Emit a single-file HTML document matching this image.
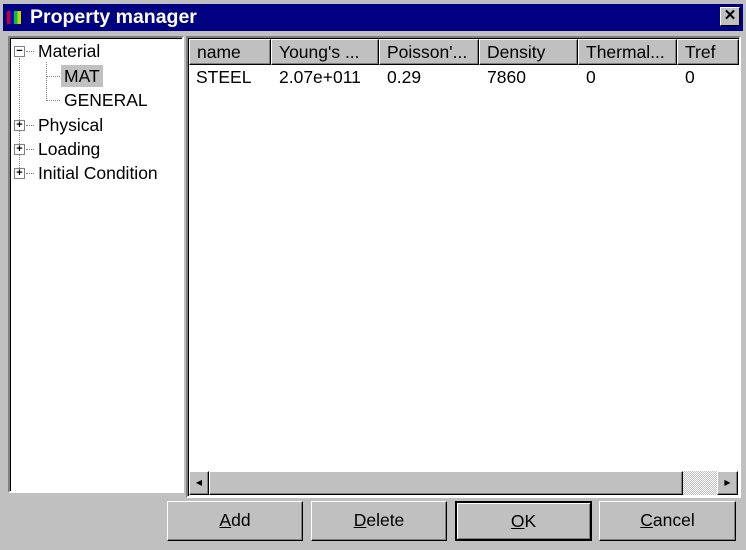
<!DOCTYPE html>
<html><head><style>
*{margin:0;padding:0;box-sizing:border-box}
body{width:746px;height:550px;background:#c0c0c0;font-family:"Liberation Sans",sans-serif;font-size:17.5px;position:relative;overflow:hidden}
.abs{position:absolute}
.title{left:3px;top:4px;width:740px;height:27px;background:#000080;color:#fff;font-weight:bold;font-size:19.5px;line-height:27px}
.close{left:717px;top:3px;width:20px;height:19px;background:#c0c0c0;border:1px solid;border-color:#fff #000 #000 #fff;color:#000;font-size:15px;line-height:16px;text-align:center;font-weight:bold}
.tree{left:8px;top:36px;width:176px;height:457px;background:#fff;border:2px solid;border-color:#808080 #fff #fff #808080;box-shadow:inset 1px 1px 0 #000}
.list{left:186px;top:36px;width:555px;height:462px;background:#fff;border:2px solid;border-color:#808080 #fff #fff #808080;box-shadow:inset 1px 1px 0 #000}
.hd{top:39px;height:26px;background:#c0c0c0;border:1px solid;border-color:#fff #000 #000 #fff;box-shadow:inset -1px -1px 0 #808080;line-height:24px;padding-left:7px;color:#000;overflow:hidden;white-space:nowrap}
.cell{top:66px;line-height:22px;color:#000}
.t{color:#000;line-height:22px;white-space:nowrap}
.pm{width:11px;height:11px;border:1px solid #808080;background:#fff;font-size:11px;line-height:9px;text-align:center;font-weight:bold}
.dv{border-left:1px dotted #808080}
.dh{border-top:1px dotted #808080;height:0}
.btn{top:501px;height:40px;background:#c0c0c0;border:1px solid;border-color:#fff #000 #000 #fff;box-shadow:inset -1px -1px 0 #808080;text-align:center;line-height:36px;color:#000}
.sb{background:#c0c0c0;border:1px solid;border-color:#fff #000 #000 #fff;box-shadow:inset -1px -1px 0 #808080}
</style></head><body>
<div class="abs title"><span style="position:absolute;left:4px;top:7px;width:14px;height:13px;background:linear-gradient(90deg,#f00 0 25%,#00f 25% 50%,#0f0 50% 75%,#ff0 75%);opacity:.8"></span><span style="position:absolute;left:27px">Property manager</span><div class="abs close">✕</div></div>

<div class="abs tree">
<div class="abs dv" style="left:9px;top:20px;height:114px"></div>
<div class="abs dv" style="left:36px;top:24px;height:39px"></div>
<div class="abs dh" style="left:36px;top:38px;width:14px"></div>
<div class="abs dh" style="left:36px;top:62px;width:14px"></div>
<div class="abs pm" style="left:4px;top:8px">−</div>
<div class="abs dh" style="left:16px;top:13px;width:8px"></div>
<div class="abs t" style="left:28px;top:2px">Material</div>
<div class="abs t" style="left:51px;top:27px;background:#c0c0c0;padding:0 3px">MAT</div>
<div class="abs t" style="left:54px;top:51px">GENERAL</div>
<div class="abs pm" style="left:4px;top:82px">+</div><div class="abs dh" style="left:16px;top:87px;width:8px"></div>
<div class="abs t" style="left:28px;top:76px">Physical</div>
<div class="abs pm" style="left:4px;top:106px">+</div><div class="abs dh" style="left:16px;top:111px;width:8px"></div>
<div class="abs t" style="left:28px;top:100px">Loading</div>
<div class="abs pm" style="left:4px;top:130px">+</div><div class="abs dh" style="left:16px;top:135px;width:8px"></div>
<div class="abs t" style="left:28px;top:124px">Initial Condition</div>
</div>

<div class="abs list"></div>
<div class="abs hd" style="left:189px;width:82px">name</div>
<div class="abs hd" style="left:271px;width:108px">Young's ...</div>
<div class="abs hd" style="left:379px;width:100px">Poisson'...</div>
<div class="abs hd" style="left:479px;width:99px">Density</div>
<div class="abs hd" style="left:578px;width:99px">Thermal...</div>
<div class="abs hd" style="left:677px;width:62px">Tref</div>
<div class="abs cell" style="left:196px">STEEL</div>
<div class="abs cell" style="left:279px">2.07e+011</div>
<div class="abs cell" style="left:387px">0.29</div>
<div class="abs cell" style="left:487px">7860</div>
<div class="abs cell" style="left:586px">0</div>
<div class="abs cell" style="left:685px">0</div>

<div class="abs" style="left:189px;top:471px;width:549px;height:24px;background:repeating-conic-gradient(#c0c0c0 0 25%,#fff 0 50%) 0 0/2px 2px"></div>
<div class="abs sb" style="left:189px;top:471px;width:20px;height:24px;font-size:8px;line-height:22px;text-align:center">◀</div>
<div class="abs sb" style="left:209px;top:471px;width:474px;height:24px"></div>
<div class="abs sb" style="left:717px;top:471px;width:21px;height:24px;font-size:8px;line-height:22px;text-align:center">▶</div>

<div class="abs btn" style="left:167px;width:136px"><u>A</u>dd</div>
<div class="abs btn" style="left:311px;width:136px"><u>D</u>elete</div>
<div class="abs btn" style="left:455px;width:137px;border:2px solid #000;box-shadow:inset 1px 1px 0 #fff,inset -1px -1px 0 #808080"><u>O</u>K</div>
<div class="abs btn" style="left:599px;width:137px"><u>C</u>ancel</div>
</body></html>
